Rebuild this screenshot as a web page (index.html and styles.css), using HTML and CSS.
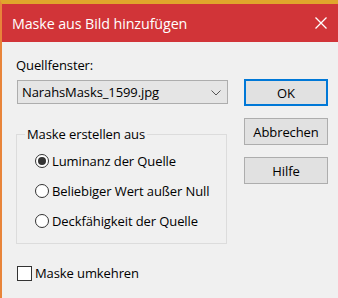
FILE: index.html
```html
<!DOCTYPE html>
<html>
<head>
<meta charset="utf-8">
<link rel="stylesheet" href="styles.css">
</head>
<body>
<div class="window">
  <div class="titlebar">
    <span class="title">Maske aus Bild hinzufügen</span>
    <svg class="close" width="12" height="12" viewBox="0 0 12 12"><path d="M0.5 0.5 L11.5 11.5 M11.5 0.5 L0.5 11.5" stroke="#fff" stroke-width="1.3"/></svg>
  </div>
  <div class="content">
    <div class="left">
      <div class="label">Quellfenster:</div>
      <div class="select">
        <span>NarahsMasks_1599.jpg</span>
        <svg class="chev" width="10" height="6" viewBox="0 0 10 6"><path d="M0.5 0.5 L5 5 L9.5 0.5" fill="none" stroke="#555" stroke-width="1"/></svg>
      </div>
      <fieldset class="group">
        <legend>Maske erstellen aus</legend>
        <div class="options">
          <div class="radio"><span class="dot checked"></span>Luminanz der Quelle</div>
          <div class="radio"><span class="dot"></span>Beliebiger Wert außer Null</div>
          <div class="radio"><span class="dot"></span>Deckfähigkeit der Quelle</div>
        </div>
      </fieldset>
      <div class="check"><span class="box"></span>Maske umkehren</div>
    </div>
    <div class="right">
      <div class="btn default">OK</div>
      <div class="btn">Abbrechen</div>
      <div class="btn">Hilfe</div>
    </div>
  </div>
</div>
</body>
</html>
```
FILE: styles.css
```css
html, body { margin: 0; padding: 0; }
body { width: 338px; height: 298px; overflow: hidden; background: #f0f0f0; font-family: "Open Sans", "Noto Sans", sans-serif; }
.window { height: 298px; box-sizing: border-box; border-top: 4px solid #e0a52c; border-left: 2px solid #e8843a; background: #f0f0f0; }
.titlebar { height: 38px; background: #d13438; display: flex; align-items: center; justify-content: space-between; padding: 0 10px 0 10px; }
.title { color: #fff; font-size: 14.3px; letter-spacing: -0.1px; }
.close { margin-right: 1px; }
.content { display: flex; padding: 0 0 0 14px; }
.left { width: 212px; display: flex; flex-direction: column; }
.label { font-size: 13px; color: #000; margin-top: 14px; line-height: 18px; letter-spacing: -0.1px; }
.select { margin-top: 6px; margin-left: 1px; height: 24px; box-sizing: border-box; border: 1px solid #adadad; background: #e5e5e5; display: flex; align-items: center; justify-content: space-between; padding: 0 6px 0 4px; font-size: 13px; letter-spacing: -0.1px; }
.chev { margin-top: 1px; }
.group { margin: 21px 0 0 0; width: 211px; height: 119px; box-sizing: border-box; border: 1px solid #dcdcdc; padding: 0; min-width: 0; }
.group legend { font-size: 13px; padding: 0 2px; margin-left: 8px; letter-spacing: -0.1px; }
.options { padding: 3px 0 0 18px; }
.radio { display: flex; align-items: center; height: 30px; font-size: 13px; letter-spacing: -0.1px; }
.dot { width: 14px; height: 14px; box-sizing: border-box; border: 1px solid #333; border-radius: 50%; background: #fff; margin-right: 3px; display: flex; align-items: center; justify-content: center; }
.dot.checked::after { content: ""; width: 8px; height: 8px; border-radius: 50%; background: #333; }
.check { display: flex; align-items: center; margin-top: 20px; margin-left: 1px; font-size: 13px; letter-spacing: -0.1px; }
.box { width: 15px; height: 15px; box-sizing: border-box; border: 1px solid #333; background: #fff; margin-right: 3px; }
.right { margin-left: 16px; padding-top: 37px; display: flex; flex-direction: column; gap: 12px; }
.btn { width: 84px; height: 27px; box-sizing: border-box; border: 1px solid #adadad; background: #e1e1e1; display: flex; align-items: center; justify-content: center; font-size: 13px; letter-spacing: -0.1px; }
.btn.default { border: 2px solid #0078d7; }
```
